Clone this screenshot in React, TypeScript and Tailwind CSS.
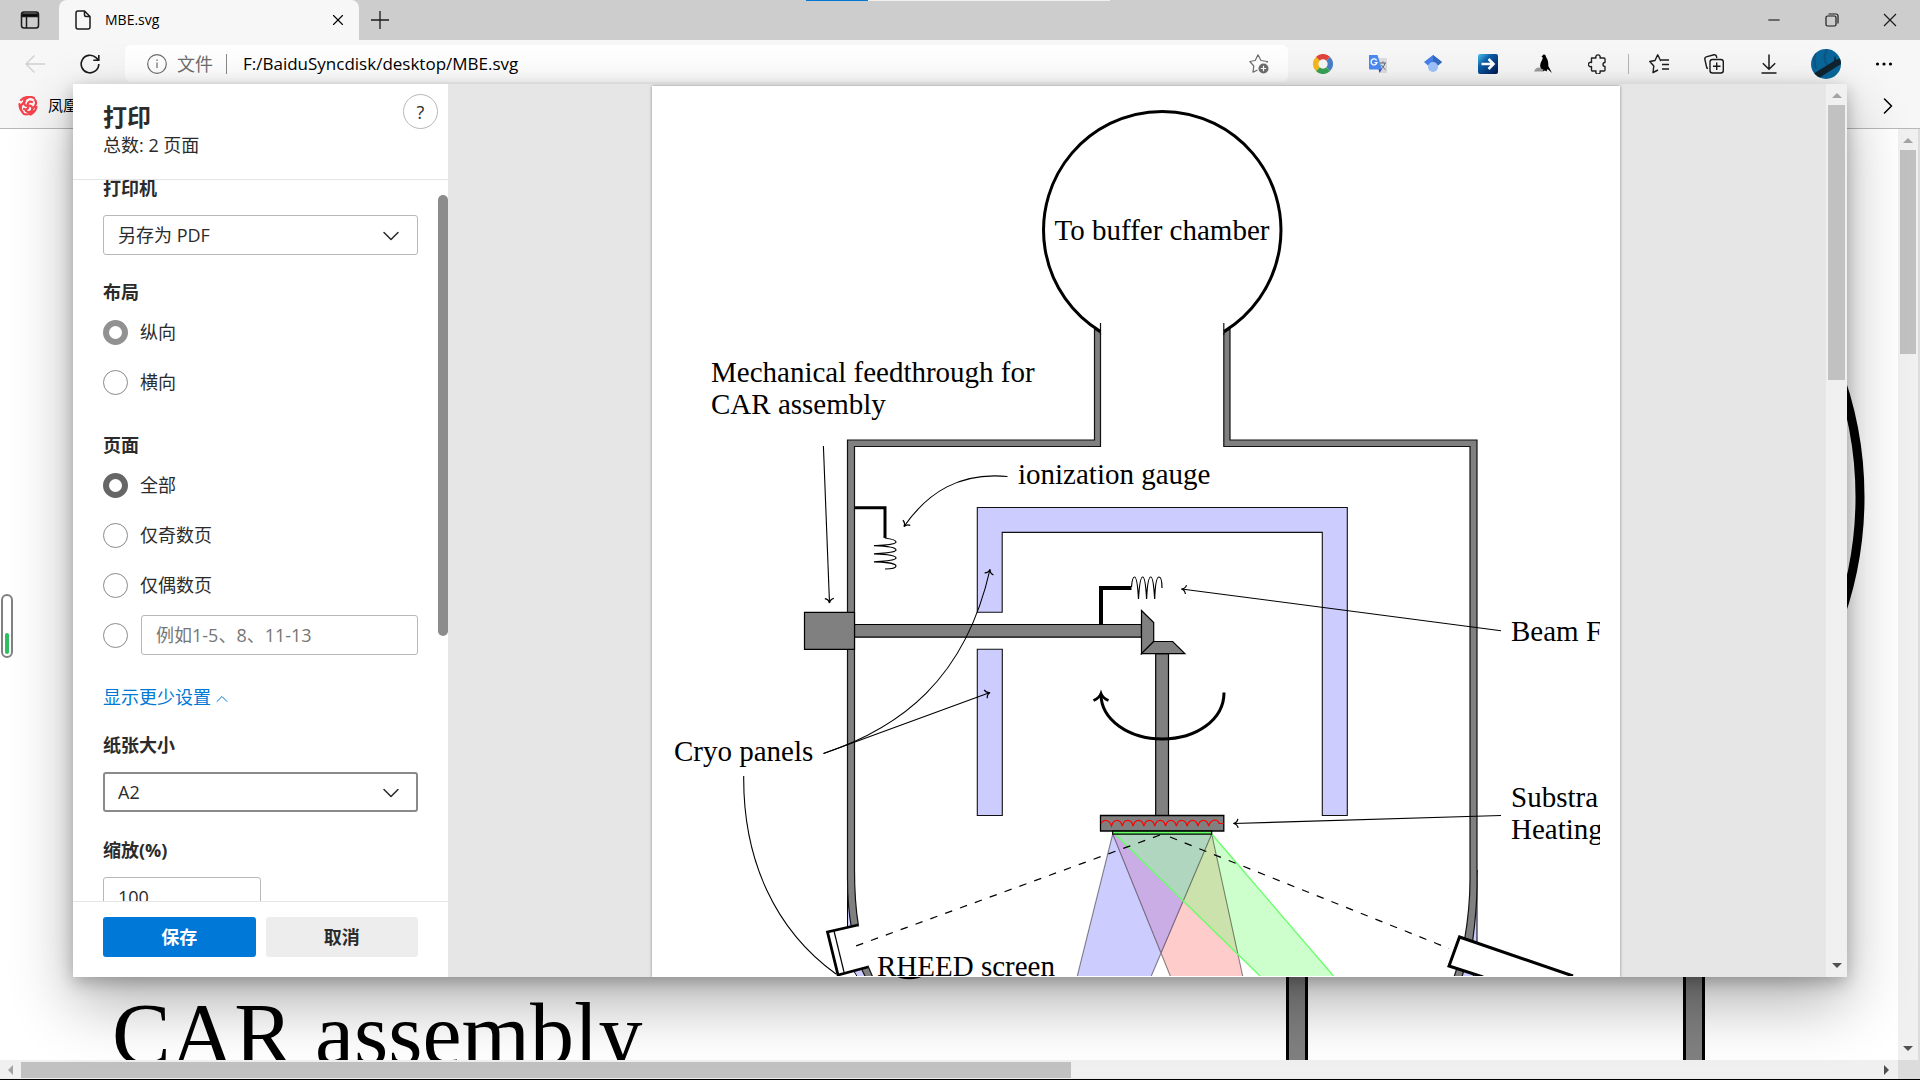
import type { ReactNode } from 'react';
import { ChevronDown, ChevronRight, ChevronUp, Minus, X } from 'lucide-react';

const ui = "font-['Open_Sans','Noto_Sans_CJK_SC',sans-serif]";

const extensions: { label: string; icon: ReactNode }[] = [
  {
    label: 'Colour ring',
    icon: (
      <svg viewBox="0 0 20 20" className="size-5" fill="none" strokeWidth="5.4">
        <path d="M4.8 4.8A7.3 7.3 0 0 1 15.2 4.8" stroke="#e2443a" />
        <path d="M15.2 4.8A7.3 7.3 0 0 1 15.2 15.2" stroke="#4a7fc6" />
        <path d="M15.2 15.2A7.3 7.3 0 0 1 4.8 15.2" stroke="#38a355" />
        <path d="M4.8 15.2A7.3 7.3 0 0 1 4.8 4.8" stroke="#f7b916" />
      </svg>
    ),
  },
  {
    label: 'Translate',
    icon: (
      <svg viewBox="0 0 20 20" className="size-5">
        <path d="M8 4h11v15h-7z" fill="#dedede" />
        <path d="M12 9h6M15 7.500v1.500M17 9c-1 4-3 5.500-4 6.500M13.500 11c1 2 2.500 3.500 4 4.500" stroke="#5c6b78" strokeWidth="1" fill="none" />
        <path d="M10.500 15h3.500l-2.500 4z" fill="#3b3fc4" />
        <path d="M1 1h8.500l4.500 14.500H2a1 1 0 0 1-1-1z" fill="#4b8af4" />
        <path d="M8.700 6.500A3 3 0 1 0 9 8.600H6.500" fill="none" stroke="#fff" strokeWidth="1.300" />
      </svg>
    ),
  },
  {
    label: 'Scholar',
    icon: (
      <svg viewBox="0 0 20 20" className="size-5">
        <path d="M10 1 1 8l4 3.500h10L19 8z" fill="#4580e8" />
        <path d="M10 1 19 8l-4 3.500L10 8z" fill="#356ac3" />
        <circle cx="10" cy="13" r="5" fill="#9fc2fa" />
      </svg>
    ),
  },
  {
    label: 'Forward',
    icon: (
      <svg viewBox="0 0 20 20" className="size-5">
        <defs>
          <linearGradient id="fwd" x1="0" y1="0" x2="1" y2="1">
            <stop offset="0" stopColor="#4fc6f2" />
            <stop offset="0.350" stopColor="#0b5ea8" />
            <stop offset="1" stopColor="#00144f" />
          </linearGradient>
        </defs>
        <rect width="20" height="20" rx="2" fill="url(#fwd)" />
        <path d="M3.500 10h12M10.500 5l5 5-5 5" fill="none" stroke="#fff" strokeWidth="2.600" />
      </svg>
    ),
  },
  {
    label: 'Bird',
    icon: (
      <svg viewBox="0 0 20 20" className="size-5">
        <path d="M1 17.500c1-2 2-4 5-4l3 1.500 2 2.500z" fill="#9a9a9a" />
        <path d="M8.500 2.800 10 1c1.500-1 3 0 3 2 2 2.500 2.500 6 2.300 9l3.700 7-4.500-4-1 2.500-1.500-1-2.500.7 1-1.500C7.500 15 6.500 13 7.500 9.500 8 7.500 9.500 6 9.800 3.500z" fill="#000" />
      </svg>
    ),
  },
  {
    label: '扩展',
    icon: (
      <svg viewBox="0 0 20 20" className="size-5" fill="none" stroke="#222" strokeWidth="1.400" strokeLinejoin="round">
        <path d="M3.500 4H8a2.200 2.200 0 1 1 4 0h4a1 1 0 0 1 1 1v3.500a2 2 0 1 0 0 4V16a1 1 0 0 1-1 1h-4a2.200 2.200 0 1 1-4 0H4.500a1 1 0 0 1-1-1v-3.500a2.200 2.200 0 1 1 0-4z" />
      </svg>
    ),
  },
];

function TitleBar() {
  return (
    <header className="flex h-10 shrink-0 items-center bg-[#cdcdcd]">
      <button aria-label="Tab 操作菜单" className="ml-5 mr-[19px] shrink-0">
        <svg viewBox="0 0 20 20" className="size-5" fill="none" stroke="#1b1b1b" strokeWidth="1.500">
          <rect x="1.500" y="2" width="17" height="16" rx="2.500" />
          <path d="M2 4h16v2.500H2z" fill="#000" />
          <path d="M6.500 7v11" />
        </svg>
      </button>
      <div className="flex h-10 w-[300px] items-center rounded-t-lg bg-[#f7f7f7] pl-4 pr-3">
        <svg viewBox="0 0 16 20" className="h-5 w-4" fill="none" stroke="#1b1b1b" strokeWidth="1.500" strokeLinejoin="round">
          <path d="M3 1h6.500L15 6.500V17a2 2 0 0 1-2 2H3a2 2 0 0 1-2-2V3a2 2 0 0 1 2-2zM9.500 1v4a1.500 1.500 0 0 0 1.500 1.500h4" />
        </svg>
        <span className="ml-[14px] flex-1 text-sm text-black">MBE.svg</span>
        <button aria-label="关闭标签页">
          <X className="size-[18px]" strokeWidth={1.5} />
        </button>
      </div>
      <button aria-label="新建标签页" className="ml-3">
        <svg viewBox="0 0 18 18" className="size-[18px]" stroke="#1b1b1b" strokeWidth="1.300">
          <path d="M9 0v18M0 9h18" />
        </svg>
      </button>
      <div className="ml-auto mr-[21px] flex items-center gap-10">
        <button aria-label="最小化">
          <Minus className="size-[18px]" strokeWidth={1.300} />
        </button>
        <button aria-label="还原">
          <svg viewBox="0 0 18 18" className="size-[18px]" fill="none" stroke="#1b1b1b" strokeWidth="1.200">
            <rect x="3" y="5" width="10" height="10" rx="1.500" />
            <path d="M5.500 3H13a2 2 0 0 1 2 2v7.500" />
          </svg>
        </button>
        <button aria-label="关闭">
          <svg viewBox="0 0 18 18" className="size-[18px]" stroke="#1b1b1b" strokeWidth="1.200">
            <path d="m3 3 12 12M15 3 3 15" />
          </svg>
        </button>
      </div>
    </header>
  );
}

function Toolbar() {
  return (
    <div className="flex h-[47px] shrink-0 items-center bg-[#f7f7f7] pl-[25px] pr-[26px]">
      <button aria-label="返回" disabled>
        <svg viewBox="0 0 20 20" className="size-5" fill="none" stroke="#cfcfcf" strokeWidth="1.300">
          <path d="M20 10H1M9.500 1.500 1 10l8.500 8.500" />
        </svg>
      </button>
      <button aria-label="刷新" className="ml-[35px]">
        <svg viewBox="0 0 20 20" className="size-5" fill="none" stroke="#1b1b1b" strokeWidth="1.600">
          <path d="M18.800 10A8.800 8.800 0 1 1 16 3.600L18.500 6M18.800 1v5.300h-5.500" />
        </svg>
      </button>
      <div className="ml-[25px] flex h-[37px] flex-1 items-center rounded-md bg-white pl-[22px] pr-[19px]">
        <svg viewBox="0 0 20 20" className="size-5 shrink-0" fill="none" stroke="#6e6e6e" strokeWidth="1.200">
          <circle cx="10" cy="10" r="9.300" />
          <path d="M10 8.500V14M10 5.500v1.500" />
        </svg>
        <span className="ml-[10px] shrink-0 text-lg text-[#6e6e6e]">文件</span>
        <span className="ml-[13px] h-5 w-px shrink-0 bg-[#8a8a8a]" />
        <input aria-label="地址栏" defaultValue="F:/BaiduSyncdisk/desktop/MBE.svg" className="ml-4 min-w-0 flex-1 text-[17px] text-black outline-none" />
        <button aria-label="将此页面添加到收藏夹" className="shrink-0">
          <svg viewBox="0 0 20 20" className="size-5" fill="none" stroke="#6e6e6e" strokeWidth="1.200" strokeLinejoin="round">
            <path d="M17.500 8.500 18.500 7.500 12 6.500 9 .8 6.200 6.500.8 7.500 4.800 12 4 18.200 8.500 16" />
            <circle cx="14.500" cy="14.500" r="5" fill="#6e6e6e" stroke="none" />
            <path d="M14.500 11.800v5.400M11.800 14.500h5.400" stroke="#fff" />
          </svg>
        </button>
      </div>
      <div className="ml-[25px] flex shrink-0 items-center gap-[35px]">
        {extensions.map((ext) => (
          <button key={ext.label} aria-label={ext.label}>
            {ext.icon}
          </button>
        ))}
      </div>
      <span className="ml-5 h-5 w-px shrink-0 bg-[#b5b5b5]" />
      <div className="ml-5 flex shrink-0 items-center gap-[35px]">
        <button aria-label="收藏夹">
          <svg viewBox="0 0 20 20" className="size-5" fill="none" stroke="#1b1b1b" strokeWidth="1.400" strokeLinejoin="round">
            <path d="M12 6.500h-.5L8.700.8 6 6.500.8 7.500l4 4.500L4 18.500l5-2.500M12 6h8M13 10.500h7M13 15h7" />
          </svg>
        </button>
        <button aria-label="集锦">
          <svg viewBox="0 0 20 20" className="size-5" fill="none" stroke="#1b1b1b" strokeWidth="1.400">
            <path d="M4 14.500 2.800 14 .8 5A2 2 0 0 1 2.200 2.800L10 .8A2 2 0 0 1 12.500 2.500l.3 1.500" />
            <rect x="6" y="5.500" width="13.300" height="13.500" rx="2.500" />
            <path d="M12.700 8.500v7.500M9 12.200h7.500" />
          </svg>
        </button>
        <button aria-label="下载">
          <svg viewBox="0 0 20 20" className="size-5" fill="none" stroke="#1b1b1b" strokeWidth="1.500">
            <path d="M10 .5V15M3.800 9.200 10 15.300l6.200-6.100M2.500 19h15" />
          </svg>
        </button>
      </div>
      <button aria-label="个人资料" className="ml-8 shrink-0">
        <svg viewBox="0 0 30 30" className="size-[30px]">
          <clipPath id="avatar">
            <circle cx="15" cy="15" r="15" />
          </clipPath>
          <g clipPath="url(#avatar)">
            <path d="M0 0h30v30H0z" fill="#0a669a" />
            <path d="M5 2c-2 6-2 12 0 18M16 0c-3 6-3 12 0 16" stroke="#0a5684" strokeWidth="2" fill="none" />
            <path d="M2 25 23 12l1-6 1 5 5-2v6L8 29z" fill="#10232f" />
          </g>
        </svg>
      </button>
      <button aria-label="设置及其他" className="ml-[33px] shrink-0">
        <svg viewBox="0 0 20 20" className="size-5">
          <circle cx="3.500" cy="10" r="1.600" />
          <circle cx="10" cy="10" r="1.600" />
          <circle cx="16.500" cy="10" r="1.600" />
        </svg>
      </button>
    </div>
  );
}

function BookmarksBar() {
  return (
    <nav className="flex h-[42px] shrink-0 items-center border-b border-[#b8b8b8] bg-[#f7f7f7] pb-1 pl-[18px] pr-[18px]">
      <a href="#" className="flex items-center gap-[10px] text-[15px] text-black">
        <svg viewBox="0 0 20 20" className="size-5" fill="none" stroke="#f5444b" strokeWidth="2.200" strokeLinecap="round">
          <path d="M10 10c-1-3 1-5 4-4M10 10c3-1 5 1 4 4-1 2-4 3-6 1M10 10c1 3-2 4-4 3M10 10c-3 0-5-2-3-5M6 5c2-4 7-5 10-3M5 7C2 10 2 14 5 17M15 12c3-2 4-6 2-8M15 15c-2 3-6 4-9 3M1.500 8c0 3 1 6 3 8M18.500 11c-1 4-3 6-6 7.500M3 4c2-2 4-3 7-3" />
        </svg>
        凤凰网
      </a>
      <button aria-label="更多收藏夹" className="ml-auto">
        <ChevronRight className="size-7" strokeWidth={1.300} />
      </button>
    </nav>
  );
}

function Arrow({ className, faded = false, dir }: { className?: string; faded?: boolean; dir: 'up' | 'down' | 'left' | 'right' }) {
  const paths = { up: 'M0 7 5 2l5 5z', down: 'M0 3l5 5 5-5z', left: 'M7 0 2 5l5 5z', right: 'M3 0l5 5-5 5z' };
  return (
    <svg viewBox="0 0 10 10" className={`size-[10px] shrink-0 ${className ?? ''}`} fill={faded ? '#a3a3a3' : '#505050'}>
      <path d={paths[dir]} />
    </svg>
  );
}

/* Page behind the dialog, the same drawing at full zoom */
function Backdrop() {
  return (
    <div className="flex min-h-0 flex-1 flex-col border-b border-black bg-white">
      <div className="flex min-h-0 flex-1">
        <svg viewBox="0 129 1898 931" preserveAspectRatio="xMinYMin slice" className="h-full min-w-0 flex-1">
          <circle cx="1495" cy="497" r="365" fill="none" stroke="#000" strokeWidth="9" />
          <path d="M896 974C902 979 916 979 924 974" fill="none" stroke="#000" strokeWidth="3" />
          <text x="112" y="1064" fontSize="88" className="font-['Liberation_Serif',serif]">
            CAR assembly
          </text>
          <g fill="#808080" stroke="#000" strokeWidth="3">
            <path d="M1287.500 760h19v320h-19zM1684.500 760h19v320h-19z" />
          </g>
        </svg>
        <div className="flex w-5 shrink-0 flex-col items-center bg-[#f0f0f0] pt-[7px] pb-[7px]">
          <Arrow dir="up" faded />
          <div className="mt-1 h-[204px] w-4 bg-[#c1c1c1]" />
          <Arrow dir="down" className="mt-auto" />
        </div>
        <div className="w-[2px] shrink-0 bg-[#dcdcdc]" />
      </div>
      <div className="flex h-[19px] shrink-0 bg-[#f0f0f0]">
        <div className="flex flex-1 items-center pl-[6px] pr-[7px]">
          <Arrow dir="left" faded />
          <div className="ml-[5px] h-4 w-[1050px] bg-[#c1c1c1]" />
          <Arrow dir="right" className="ml-auto" />
        </div>
        <div className="w-[22px] bg-[#dcdcdc]" />
      </div>
    </div>
  );
}

/* Print preview sheet */
function Diagram() {
  return (
    <svg viewBox="652 86 968 891" className="block w-full">
      <defs>
        <clipPath id="sheet">
          <path d="M652 86h948v890H652z" />
        </clipPath>
        <marker id="tip" viewBox="0 0 10 12" refX="8" refY="6" markerWidth="10" markerHeight="12" markerUnits="userSpaceOnUse" orient="auto">
          <path d="M3.500 1.500C4 4 6 5.600 8 6 6 6.400 4 8 3.500 10.500" fill="none" stroke="#000" strokeWidth="1.200" />
        </marker>
      </defs>
      <g clipPath="url(#sheet)">
        {/* cryo shroud slivers at the bottom corners */}
        <g fill="#ccccff" stroke="#000" strokeWidth="1">
          <path d="M847.500 870V930h8zM1477 870V945h-8z" />
          <path d="M852 968l12 0 8 10h-14zM1460 968l14 6-2 5h-14z" />
        </g>

        {/* chamber wall */}
        <g fill="#808080" stroke="#111" strokeWidth="1.200">
          <path d="M847.500 878V440H1094.500V329l6 4V446.500H854.500V870C854.500 892 855.500 908 858.500 926l-7 2C848.500 912 847.500 895 847.500 878z" />
          <path d="M1477 885V440H1230V329l-6.200 4V446.500H1470V880C1470 902 1468 920 1464.500 940l8 2C1475.500 920 1477 905 1477 885z" />
          <path d="M861 968l7-2 6 14h-7zM1457 968l7 2-3 10h-8z" />
        </g>
        <path d="M1100.500 323v12M1223.800 323v12" stroke="#111" strokeWidth="1.200" />
        <path d="M1100.500 331.500A118.700 118.700 0 1 1 1224 331.500" fill="none" stroke="#000" strokeWidth="3" />

        {/* cryo panels */}
        <g fill="#ccccff" stroke="#111" strokeWidth="1.100">
          <path d="M977.300 612.300V507.500H1347.300V815.500H1322.300V532.400H1002.200V612.300z" />
          <path d="M977.300 649.300h25v166.200h-25z" />
        </g>

        {/* manipulator shafts and bevel gears */}
        <g fill="#808080" stroke="#000" strokeWidth="1.200">
          <path d="M854.500 624.500h287v12.700h-287z" />
          <path d="M804.500 612.300h50v37h-50z" />
          <path d="M1155.700 653.700h12.800v162h-12.800z" />
          <path d="M1141.500 610.500l12.200 12v19l-12.200 12.200z" />
          <path d="M1141.500 653.700l12.200-12.200h19l12.200 12.200z" />
        </g>

        {/* gauges */}
        <path d="M854.500 507.700H885V538" fill="none" stroke="#000" strokeWidth="3" />
        <path
          d="M885 538C892 539 896 540 896 542C896 545 882 545 874 545.700C882 546 896 547 896 550C896 553 882 553 874 553.800C882 554 896 555 896 558C896 561 882 561 874 561.900C882 562 896 563 896 566C896 568.500 890 569 885 569"
          fill="none"
          stroke="#000"
          strokeWidth="1.200"
        />
        <path d="M1101 624V588H1131.500" fill="none" stroke="#000" strokeWidth="4" />
        <path
          d="M1131.500 587C1132 580 1133 577 1134.500 577C1137 577 1138 590 1138.500 599C1139 590 1140 577 1142.700 577C1145.500 577 1146 590 1146.600 599C1147 590 1148 577 1150.800 577C1153.500 577 1154 590 1154.700 599C1155 590 1156 577 1159 577C1161 577 1162 582 1162 588"
          fill="none"
          stroke="#000"
          strokeWidth="1.200"
        />

        {/* molecular beams */}
        <path d="M1112.700 834H1211.700L1151.300 976H1077.300z" fill="#ccccff" />
        <path d="M1112.700 834H1211.700L1242.700 976H1170.300z" fill="#ffcccc" />
        <path d="M1112.700 834H1211.700L1161.300 953z" fill="#cbade6" />
        <path d="M1115 834H1211.700L1333.500 976H1260z" fill="#ccffcc" />
        <path d="M1115 834H1211.700L1238.500 955z" fill="#cbe2ac" />
        <path d="M1115 834H1211.700L1183 901z" fill="#b0d6c0" />
        <g fill="none" strokeWidth="1.100">
          <path d="M1112.700 834 1077.300 976M1211.700 834 1151.300 976M1112.700 834 1170.300 976M1211.700 834 1242.700 976" stroke="#000" strokeOpacity="0.450" />
          <path d="M1115 834 1260 976M1211.700 834 1333.500 976" stroke="#66ff66" strokeWidth="1.300" />
        </g>

        {/* heater and substrate */}
        <path d="M1100.500 815.500h123.300v15.500h-123.300z" fill="#808080" stroke="#000" strokeWidth="1.300" />
        <path
          d="M1101 824c2-5 8-5 10.500 2c2-7.500 9-7.500 10.800 0c2-7.500 9-7.500 10.800 0c2-7.500 9-7.500 10.800 0c2-7.500 9-7.500 10.800 0c2-7.500 9-7.500 10.800 0c2-7.500 9-7.500 10.800 0c2-7.500 9-7.500 10.800 0c2-7.500 9-7.500 10.800 0c2-7.500 9-7.500 10.800 0c2-7.500 9-7.500 10.500-2.500h4.500"
          fill="none"
          stroke="#f00"
          strokeWidth="1.200"
        />
        <path d="M1112.700 831.200h99v3h-99z" fill="#66ff66" stroke="#000" strokeWidth="1.200" />

        {/* rotation arrow */}
        <path d="M1224 692.500C1224 720 1196 739 1162.500 739C1129 739 1101 720 1101 694" fill="none" stroke="#000" strokeWidth="3" />
        <path d="M1093.500 700.500C1098 698.500 1100 696.500 1101 693.500C1102 696.500 1104 698.500 1108.500 700.500" fill="none" stroke="#000" strokeWidth="2.600" />

        {/* ports */}
        <path d="M858 925 827.500 932 838 975 868 967" fill="#fff" stroke="#000" strokeWidth="2.800" />
        <path d="M834 931 844 972" stroke="#000" strokeWidth="1.200" />
        <path d="M1573 976 1459.500 937 1449 966 1483 977" fill="#fff" stroke="#000" strokeWidth="3" />

        {/* RHEED line of sight */}
        <g stroke="#000" strokeWidth="1.200" strokeDasharray="7.500 8.300">
          <path d="M1160 835 849 948.500" />
          <path d="M1170 837 1449 948.500" />
        </g>

        {/* leader lines */}
        <g fill="none" stroke="#000" strokeWidth="1.100">
          <path d="M823.400 446 829.500 603" markerEnd="url(#tip)" />
          <path d="M1007.500 476.500C960 472 928 492 904 526.500" markerEnd="url(#tip)" />
          <path d="M823.500 753.500 990 692.500" markerEnd="url(#tip)" />
          <path d="M823.500 753.500C900 728 965 680 990 569.500" markerEnd="url(#tip)" />
          <path d="M743.700 776C743 860 775 930 836 974" />
          <path d="M1501 630.700 1181.500 589" markerEnd="url(#tip)" />
          <path d="M1501 815.500 1233.500 823.500" markerEnd="url(#tip)" />
        </g>

        <g fontSize="29" className="font-['Liberation_Serif',serif]">
          <text x="1162" y="240" textAnchor="middle">To buffer chamber</text>
          <text x="711" y="382">Mechanical feedthrough for</text>
          <text x="711" y="414">CAR assembly</text>
          <text x="1018" y="484">ionization gauge</text>
          <text x="674" y="761">Cryo panels</text>
          <text x="877" y="976">RHEED screen</text>
          <text x="1511" y="641">Beam F</text>
          <text x="1511" y="807">Substra</text>
          <text x="1511" y="839">Heating</text>
        </g>
      </g>
    </svg>
  );
}

const radioBase = 'size-[25px] shrink-0 appearance-none rounded-full border border-[#8a8a8a] bg-white';

function Radio({ name, label, checked = false, disabled = false }: { name: string; label: string; checked?: boolean; disabled?: boolean }) {
  return (
    <label className="flex h-10 items-center gap-3">
      <input
        type="radio"
        name={name}
        defaultChecked={checked}
        className={`${radioBase} checked:border-[6px] ${disabled ? 'checked:border-[#919191]' : 'checked:border-[#666]'}`}
      />
      {label}
    </label>
  );
}

function Select({ id, value, focused = false }: { id: string; value: string; focused?: boolean }) {
  return (
    <div className="relative">
      <select
        id={id}
        defaultValue={value}
        className={`h-10 w-full appearance-none rounded-[3px] bg-white outline-none ${focused ? 'border-2 border-[#8a8a8a] px-[13px]' : 'border border-[#b8b8b8] px-[14px]'}`}
      >
        <option>{value}</option>
      </select>
      <ChevronDown className="pointer-events-none absolute top-[7px] right-[13px] size-7" strokeWidth={1.300} />
    </div>
  );
}

function PrintSettings() {
  return (
    <form className="relative flex w-[375px] shrink-0 flex-col bg-white text-lg leading-6 text-[#2b2b2b]" onSubmit={(e) => e.preventDefault()}>
      <div className="flex h-24 shrink-0 justify-between border-b border-[#e5e5e5] pt-[10px] pr-[10px] pl-[30px]">
        <div className="pt-[7px]">
          <h1 className="text-2xl leading-8 font-bold">打印</h1>
          <p>总数: 2 页面</p>
        </div>
        <button type="button" aria-label="帮助" className="size-[35px] rounded-full border border-[#b8b8b8] text-lg">
          ?
        </button>
      </div>

      <div className="min-h-0 flex-1 overflow-hidden px-[30px]">
        <div className="-mt-1 flex flex-col">
          <label htmlFor="printer" className="mb-[15px] font-bold">打印机</label>
          <Select id="printer" value="另存为 PDF" />

          <fieldset className="mt-[25px]">
            <legend className="mb-2 font-bold">布局</legend>
            <div className="flex flex-col gap-[10px]">
              <Radio name="layout" label="纵向" checked disabled />
              <Radio name="layout" label="横向" />
            </div>
          </fieldset>

          <fieldset className="mt-[31px]">
            <legend className="mb-2 font-bold">页面</legend>
            <div className="flex flex-col gap-[10px]">
              <Radio name="pages" label="全部" checked />
              <Radio name="pages" label="仅奇数页" />
              <Radio name="pages" label="仅偶数页" />
              <div className="flex h-10 items-center gap-[13px]">
                <input type="radio" name="pages" aria-label="自定义页面" className={radioBase} />
                <input
                  aria-label="页面范围"
                  placeholder="例如1-5、8、11-13"
                  className="h-10 min-w-0 flex-1 rounded-[3px] border border-[#b8b8b8] px-[14px] placeholder:text-[#767676]"
                />
              </div>
            </div>
          </fieldset>

          <button type="button" className="mt-[30px] flex items-center gap-[1px] text-[#0078d4]">
            显示更少设置
            <ChevronUp className="mt-1 size-5" strokeWidth={1.200} />
          </button>

          <label htmlFor="paper" className="mt-6 mb-[15px] font-bold">纸张大小</label>
          <Select id="paper" value="A2" focused />

          <label htmlFor="scale" className="mt-[26px] mb-[15px] font-bold">缩放(%)</label>
          <input id="scale" defaultValue="100" className="h-10 w-[158px] rounded-[3px] border border-[#b8b8b8] px-[14px]" />
        </div>
      </div>
      <div className="absolute top-[111px] right-0 h-[441px] w-[10px] rounded-full bg-[#8c8c8c]" />

      <div className="flex shrink-0 gap-[10px] border-t border-[#e5e5e5] px-[30px] pt-[15px] pb-5 font-bold">
        <button type="submit" className="h-10 flex-1 rounded-[3px] bg-[#0078d7] text-white">保存</button>
        <button type="button" className="h-10 flex-1 rounded-[3px] bg-[#ededed]">取消</button>
      </div>
    </form>
  );
}

function PrintDialog() {
  return (
    <div
      role="dialog"
      aria-label="打印"
      className="absolute inset-x-[73px] top-[84px] bottom-[103px] flex bg-[#e6e6e6] shadow-[0_26px_58px_rgba(0,0,0,0.3),0_5px_16px_rgba(0,0,0,0.25)]"
    >
      <PrintSettings />
      <div className="flex min-w-0 flex-1 justify-center overflow-hidden pt-[2px] pr-[2px]">
        <div className="w-full max-w-[968px] bg-white shadow-[0_0_3px_rgba(0,0,0,0.4)]">
          <Diagram />
        </div>
      </div>
      <div className="flex w-[21px] shrink-0 flex-col items-center bg-[#f0f0f0] pt-[7px] pb-[7px]">
        <Arrow dir="up" faded />
        <div className="mt-1 h-[275px] w-[17px] bg-[#c1c1c1]" />
        <Arrow dir="down" className="mt-auto" />
      </div>
    </div>
  );
}

export default function App() {
  return (
    <div className={`relative flex h-screen flex-col overflow-hidden bg-white ${ui}`}>
      <TitleBar />
      <Toolbar />
      <BookmarksBar />
      <Backdrop />
      <PrintDialog />
      {/* page loading strip */}
      <div className="absolute top-0 left-[42%] flex h-px w-[304px]">
        <div className="w-[62px] bg-[#0078d4]" />
        <div className="flex-1 bg-[#f0f0f0]" />
      </div>
      {/* volume widget docked to the left edge */}
      <div className="absolute top-[594px] left-px flex h-16 w-3 flex-col justify-end rounded-full border-2 border-[#808080] bg-white p-[2px]">
        <div className="h-[21px] rounded-full bg-[#2dbe60]" />
      </div>
    </div>
  );
}
